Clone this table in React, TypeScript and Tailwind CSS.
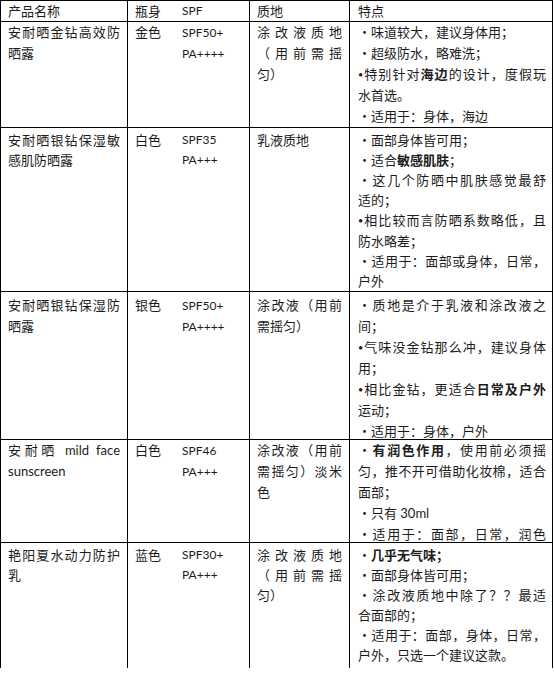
import React from 'react';

type Kids = { children?: React.ReactNode };

// one printed line of a cell; `j` spreads it across the full cell width
function L({ j, children }: Kids & { j?: boolean }) {
  return <div className={j ? 'text-justify [text-align-last:justify]' : ''}>{children}</div>;
}

function B({ children }: Kids) {
  return <span className="font-bold">{children}</span>;
}

// the small tight bullet used on some lines
function Dot() {
  return <span className="text-[9px] align-[1px]">•</span>;
}

function Row({
  h,
  lead,
  pt,
  name,
  color,
  spf,
  texture,
  notes,
}: {
  h: string;
  lead: string;
  pt: string;
  name: React.ReactNode;
  color: string;
  spf: string[];
  texture: React.ReactNode;
  notes: React.ReactNode;
}) {
  return (
    <div className={`flex shrink-0 border-b border-black ${h} ${lead}`}>
      <div className={`w-[127px] shrink-0 border-r border-black px-[7px] ${pt}`}>{name}</div>
      <div className={`flex w-[122px] shrink-0 border-r border-black pl-[7px] ${pt}`}>
        <div className="w-[47px] shrink-0">{color}</div>
        <div className="text-[12px]">
          {spf.map((s) => (
            <div key={s}>{s}</div>
          ))}
        </div>
      </div>
      <div className={`w-[100px] shrink-0 border-r border-black px-[7px] ${pt}`}>{texture}</div>
      <div className={`w-[203px] shrink-0 border-r border-black pl-[8px] pr-[6px] ${pt}`}>{notes}</div>
    </div>
  );
}

export default function App() {
  return (
    <div className="min-h-[691px] bg-white" lang="zh-CN">
      <div
        className="flex h-[668px] w-[553px] flex-col overflow-hidden border-l border-t border-black text-[13px] text-[#1c1c1c]"
        style={{ fontFamily: "Lato, 'Noto Sans CJK SC', sans-serif" }}
      >
        {/* header */}
        <div className="flex h-[21px] shrink-0 border-b border-black leading-[20px]">
          <div className="w-[127px] shrink-0 border-r border-black px-[7px]">产品名称</div>
          <div className="flex w-[122px] shrink-0 border-r border-black pl-[7px]">
            <div className="w-[47px] shrink-0">瓶身</div>
            <div className="text-[12px]">SPF</div>
          </div>
          <div className="w-[100px] shrink-0 border-r border-black px-[7px]">质地</div>
          <div className="w-[203px] shrink-0 border-r border-black pl-[8px]">特点</div>
        </div>

        <Row
          h="h-[106px]"
          lead="leading-[21px]"
          pt="pt-0"
          name={
            <>
              <L j>安耐晒金钻高效防</L>
              <L>晒露</L>
            </>
          }
          color="金色"
          spf={['SPF50+', 'PA++++']}
          texture={
            <>
              <L j>涂改液质地</L>
              <L j>（用前需摇</L>
              <L>匀）</L>
            </>
          }
          notes={
            <>
              <L>・味道较大，建议身体用；</L>
              <L>・超级防水，略难洗；</L>
              <L j>
                <Dot />
                特别针对<B>海边</B>的设计，度假玩
              </L>
              <L>水首选。</L>
              <L>・适用于：身体，海边</L>
            </>
          }
        />

        <Row
          h="h-[164px]"
          lead="leading-[20px]"
          pt="pt-[2px]"
          name={
            <>
              <L j>安耐晒银钻保湿敏</L>
              <L>感肌防晒露</L>
            </>
          }
          color="白色"
          spf={['SPF35', 'PA+++']}
          texture={<L>乳液质地</L>}
          notes={
            <>
              <L>・面部身体皆可用；</L>
              <L>
                ・适合<B>敏感肌肤</B>；
              </L>
              <L j>・这几个防晒中肌肤感觉最舒</L>
              <L>适的；</L>
              <L j>
                <Dot />
                相比较而言防晒系数略低，且
              </L>
              <L>防水略差；</L>
              <L j>・适用于：面部或身体，日常，</L>
              <L>户外</L>
            </>
          }
        />

        <Row
          h="h-[148px]"
          lead="leading-[21px]"
          pt="pt-[3px]"
          name={
            <>
              <L j>安耐晒银钻保湿防</L>
              <L>晒露</L>
            </>
          }
          color="银色"
          spf={['SPF50+', 'PA++++']}
          texture={
            <>
              <L j>涂改液（用前</L>
              <L>需摇匀）</L>
            </>
          }
          notes={
            <>
              <L j>・质地是介于乳液和涂改液之</L>
              <L>间；</L>
              <L j>
                <Dot />
                气味没金钻那么冲，建议身体
              </L>
              <L>用；</L>
              <L j>
                <Dot />
                相比金钻，更适合<B>日常及户外</B>
              </L>
              <L>运动；</L>
              <L>・适用于：身体，户外</L>
            </>
          }
        />

        <Row
          h="h-[103px]"
          lead="leading-[21px]"
          pt="pt-0"
          name={
            <>
              <L j>安耐晒 mild face</L>
              <L>sunscreen</L>
            </>
          }
          color="白色"
          spf={['SPF46', 'PA+++']}
          texture={
            <>
              <L j>涂改液（用前</L>
              <L j>需摇匀）淡米</L>
              <L>色</L>
            </>
          }
          notes={
            <>
              <L j>
                ・<B>有润色作用</B>，使用前必须摇
              </L>
              <L j>匀，推不开可借助化妆棉，适合</L>
              <L>面部；</L>
              <L>・只有 30ml</L>
              <L j>・适用于：面部，日常，润色</L>
            </>
          }
        />

        <Row
          h="h-[140px]"
          lead="leading-[20px]"
          pt="pt-[2px]"
          name={
            <>
              <L j>艳阳夏水动力防护</L>
              <L>乳</L>
            </>
          }
          color="蓝色"
          spf={['SPF30+', 'PA+++']}
          texture={
            <>
              <L j>涂改液质地</L>
              <L j>（用前需摇</L>
              <L>匀）</L>
            </>
          }
          notes={
            <>
              <L>
                ・<B>几乎无气味；</B>
              </L>
              <L>・面部身体皆可用；</L>
              <L j>・涂改液质地中除了？？最适</L>
              <L>合面部的；</L>
              <L j>・适用于：面部，身体，日常，</L>
              <L>户外，只选一个建议这款。</L>
            </>
          }
        />
      </div>
    </div>
  );
}
